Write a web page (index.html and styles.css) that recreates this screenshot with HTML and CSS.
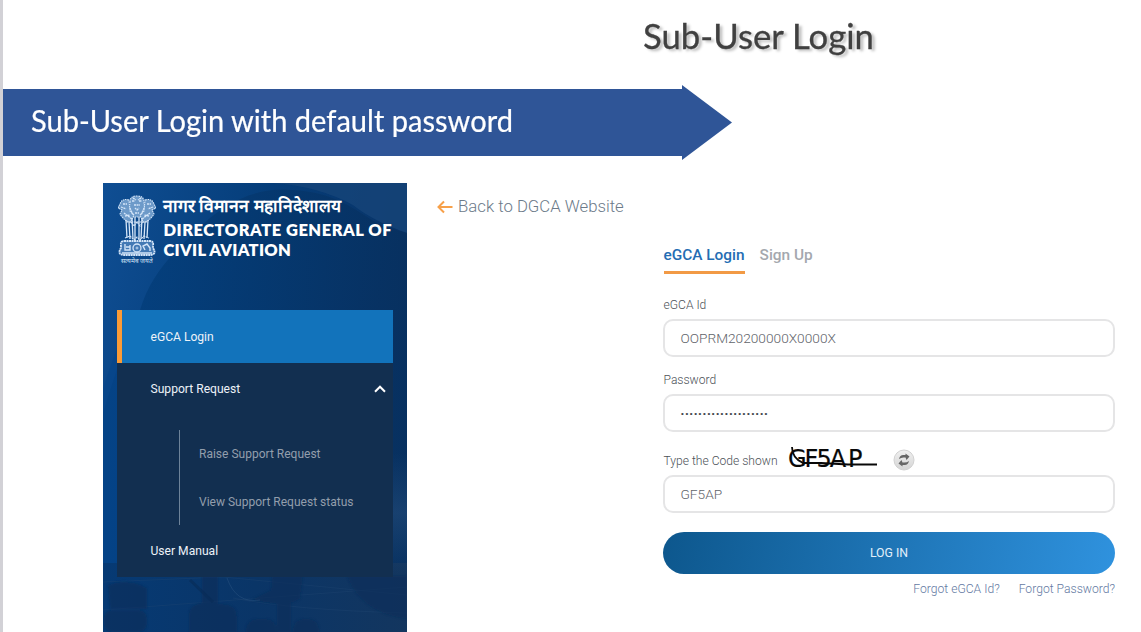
FILE: index.html
```html
<!DOCTYPE html>
<html lang="en">
<head>
<meta charset="utf-8">
<title>Sub-User Login</title>
<link rel="stylesheet" href="styles.css">
</head>
<body>
<div class="slide">
  <header class="slide-title"><h1>Sub-User Login</h1></header>
  <div class="banner"><h2>Sub-User Login with default password</h2></div>
  <main class="content">
    <aside class="sidebar">
      <svg class="scene" viewBox="0 0 304 449" preserveAspectRatio="none" aria-hidden="true">
        <defs>
          <linearGradient id="sky" x1="0" y1="0" x2="1" y2="0.35"><stop offset="0" stop-color="#0f4e93"/><stop offset=".5" stop-color="#053d79"/><stop offset="1" stop-color="#0a3264"/></linearGradient>
          <linearGradient id="hull" x1="0" y1="0" x2="1" y2="0"><stop offset="0" stop-color="#03407f"/><stop offset="1" stop-color="#07305f"/></linearGradient>
          <linearGradient id="ground" x1="0" y1="0" x2="1" y2="0"><stop offset="0" stop-color="#063a74"/><stop offset=".5" stop-color="#0a3567"/><stop offset="1" stop-color="#13365f"/></linearGradient>
          <linearGradient id="glow" x1="0" y1="0" x2="0" y2="1"><stop offset="0" stop-color="#315986" stop-opacity="0"/><stop offset=".5" stop-color="#315986" stop-opacity=".4"/><stop offset="1" stop-color="#315986" stop-opacity="0"/></linearGradient>
          <filter id="soft"><feGaussianBlur stdDeviation="1.2"/></filter>
        </defs>
        <rect width="304" height="449" fill="url(#sky)"/>
        <path d="M170 0H304V50Q270 38 250 22Q215 3 170 0Z" fill="#174679" opacity=".75"/>
        <path d="M37 127C48 91 70 70 92 49C125 14 160 4 190 7C230 9 250 25 277 42L304 50V400H0V230Q18 170 37 127Z" fill="url(#hull)" opacity=".85"/>
        <path d="M0 205L14 165V394H0Z" fill="#05458a" opacity=".6"/>
        <rect y="380" width="304" height="69" fill="url(#ground)"/>
        <path d="M0 399L120 394L304 412M0 427L304 404M130 415Q190 427 304 430" fill="none" stroke="#214873" opacity=".35"/>
        <g fill="#082d5a" opacity=".65" filter="url(#soft)">
          <path d="M99 393H115V421Q134 420 134 434V449H86V430Q88 421 99 420Z"/>
          <path d="M169 393H200L197 416L188 420V449H174V421L148 417L168 407Z"/>
          <rect x="143" y="436" width="31" height="26" rx="11"/><rect x="190" y="436" width="26" height="26" rx="10"/>
          <path d="M5 402Q24 394 44 405V426H7Z"/><rect x="1" y="427" width="43" height="22" rx="8"/>
          <path d="M244 393H304V436Q258 430 244 393Z"/>
        </g>
        <path d="M87 397L110 419" fill="none" stroke="#082b57" stroke-width="3" opacity=".6"/>
        <path d="M124 395Q133 421 157 417" fill="none" stroke="#315986" opacity=".4"/>
        <rect x="290" y="270" width="14" height="120" fill="url(#glow)"/>
      </svg>
      <div class="brand">
        <div class="emblem">
          <svg width="38" height="62" viewBox="0 0 38 62" fill="none" stroke="#d4e5f8" aria-hidden="true">
            <path d="M12 7Q12 1 19 1Q26 1 26 7L27 15L23 22H15L11 15Z" fill="#6d9ac9" stroke-width="1.2" stroke-dasharray="1.5 .8"/>
            <path d="M11 5Q4 3 2 9L0 13L4 15L2 19Q7 27 13 27L16 20L12 16ZM27 5Q34 3 36 9L38 13L34 15L36 19Q31 27 25 27L22 20L26 16Z" fill="#6d9ac9" stroke-width="1.1" stroke-dasharray="1.5 .8"/>
            <path d="M14 6H17M21 6H24M16 10H22M17 13L19 15L21 13M5 9H9M3 12L8 14M29 9H33M35 12L30 14M6 18L14 24M32 18L24 24M12 13L15 20M26 13L23 20M17 18H21M7 21L12 20M31 21L26 20M15 3L18 5M23 3L20 5" stroke-width="1.3" stroke-dasharray="2 .6"/>
            <path d="M8 25L9 43M11 27L12 44M14 23L15 44M17 22L17 45M21 22L21 45M24 23L23 44M27 27L26 44M30 25L29 43" stroke-width="1.3"/>
            <path d="M8 27H30M13 27L16 31L19 27L22 31L25 27M7 43L12 41L16 45L19 42L22 45L26 41L31 43" stroke-width="1.1" stroke-dasharray="2 .7"/>
            <path d="M6 46H32Q36 46 35 51V53Q39 59 33 60H5Q-1 59 3 53V51Q2 46 6 46Z" fill="#4379b4" stroke-width="1.8" stroke-dasharray="2 .5"/>
            <path d="M4 58H34M7 49V55H12V50M12 52H8M27 55L25 51L29 49L32 53V56" stroke-width="1.4"/>
            <circle cx="19" cy="53" r="4" stroke-width="1.3"/><circle cx="19" cy="53" r="1" stroke-width=".8"/>
          </svg>
          <span class="motto" lang="hi">सत्यमेव जयते</span>
        </div>
        <div class="brand-text">
          <div class="hindi" lang="hi">नागर विमानन महानिदेशालय</div>
          <div class="english"><span class="line-a">DIRECTORATE GENERAL OF</span><br><span class="line-b">CIVIL AVIATION</span></div>
        </div>
      </div>
      <nav class="menu">
        <a class="item active">eGCA Login</a>
        <a class="item support">Support Request
          <svg width="12" height="8" viewBox="0 0 12 8" fill="none" stroke="#fff" stroke-width="2"><path d="M1 6.7L6 1.7L11 6.7"/></svg>
        </a>
        <div class="submenu"><a class="raise">Raise Support Request</a><a class="view">View Support Request status</a></div>
        <a class="item manual">User Manual</a>
      </nav>
    </aside>
    <section class="page">
      <a class="back"><svg width="16" height="14" viewBox="0 0 16 14" fill="none" stroke="#f7a049" stroke-width="2"><path d="M15.5 7H1.5M7 1.5L1.5 7L7 12.5"/></svg><span>Back to DGCA Website</span></a>
      <form class="login">
        <div class="tabs"><a class="tab selected">eGCA Login</a><a class="tab signup">Sign Up</a></div>
        <label class="label id-label">eGCA Id</label>
        <div class="field"><span class="id-value">OOPRM20200000X0000X</span></div>
        <label class="label password-label">Password</label>
        <div class="field password"><span class="dots">••••••••••••••••••••</span></div>
        <div class="captcha-row">
          <label class="label code-label">Type the Code shown</label>
          <div class="captcha"><span>GF5<i class="wide">A</i>P</span>
            <svg width="90" height="28" viewBox="0 0 90 28" fill="none" stroke="#080808"><path d="M4 2Q4 13 15 18L33 18L60 19.5H89" stroke-width="1.8"/></svg>
          </div>
          <svg class="refresh" width="22" height="22" viewBox="0 0 22 22"><defs><linearGradient id="knob" x1="0" y1="0" x2="0" y2="1"><stop offset="0" stop-color="#f0f0f0"/><stop offset="1" stop-color="#d5d5d5"/></linearGradient></defs><circle cx="11" cy="11" r="10" fill="url(#knob)" stroke="#d2d2d2"/><path d="M6 10Q7 5.5 11 6H12.5V4.500L16.5 7.500L13.500 11L12.500 8.500H10.5Q8 8.500 6 10ZM16 12Q15 16.500 11 16H9.500V17.500L5.500 14.500L8.500 11L9.500 13.500H11.500Q14 13.500 16 12Z" fill="#666"/></svg>
        </div>
        <div class="field"><span class="code-value">GF5AP</span></div>
        <button class="submit" type="button">LOG IN</button>
        <div class="links"><a class="forgot-id">Forgot eGCA Id?</a><a class="forgot-pass">Forgot Password?</a></div>
      </form>
    </section>
  </main>
</div>
</body>
</html>
```
FILE: styles.css
```css
* { box-sizing: border-box; }
body { margin: 0; background: #fff; font-family: Roboto, sans-serif; }
h1, h2 { margin: 0; width: max-content; font-weight: 400; font-family: Lato, sans-serif; white-space: nowrap; transform-origin: 0 50%; }
.slide { width: 1141px; height: 632px; overflow: hidden; border-left: 3px solid #d2d1d6; }
.slide-title { height: 85px; padding: 14px 0 0 640px; }
h1 { font-size: 35.5px; line-height: 44px; color: #404040; text-shadow: 3px 2px 3px #bbb; transform: scaleX(.978); -webkit-text-stroke: .3px #404040; }
.banner { width: 730px; height: 75px; padding: 12px 0 0 28px; background: #2f5597; clip-path: polygon(0 4px, 679px 4px, 679px 0, 729px 37.5px, 679px 75px, 679px 71px, 0 71px); }
h2 { color: #fff; font-size: 30px; line-height: 46px; transform: scaleX(.968); -webkit-text-stroke: .2px #fff; }
.content { display: flex; height: 449px; margin: 23px 0 0 100px; }
.sidebar { display: grid; width: 304px; height: 449px; grid-template: 127px 322px / 304px; overflow: hidden; }
.scene { grid-area: 1 / 1 / 3 / 2; width: 304px; height: 449px; }
.brand { grid-area: 1 / 1; z-index: 1; display: flex; padding: 12px 0 0 15px; color: #fff; }
.emblem { width: 38px; margin-right: 7px; display: flex; flex-direction: column; align-items: center; }
.motto { white-space: nowrap; font-size: 6.5px; line-height: 8px; font-weight: 400; color: #d4e5f8; }
.hindi { height: 25px; line-height: 22px; font-size: 17.4px; font-weight: 600; white-space: nowrap; }
.english { font: 800 16.5px/20px Lato, sans-serif; white-space: nowrap; letter-spacing: .5px; padding-left: .5px; }
.line-b { letter-spacing: .27px; }
.menu { grid-area: 2 / 1; z-index: 1; align-self: start; width: 276px; height: 267px; margin-left: 14px; background: #122f50; color: #edf2f8; font-size: 12.1px; }
.item { display: flex; align-items: center; height: 53px; padding: 0 7px 0 33.5px; font-weight: 400; }
.item.active { padding-left: 28.5px; border-left: 5px solid #fb9b36; background: #1273bb; }
.support { justify-content: space-between; height: 52px; }
.submenu { height: 95px; margin: 15px 0 0 62px; padding-left: 19px; border-left: 1px solid #6d8399; color: #929eac; font-size: 12.03px; }
.submenu a { display: block; height: 48px; line-height: 48px; }
.manual { height: 52px; }
.page { width: 720px; padding-left: 30px; }
.back { display: flex; align-items: center; gap: 5px; height: 45px; font-size: 16.75px; color: #6c7a89; font-weight: 300; }
.back svg { margin-top: 3px; }
.login { width: 452px; margin: 12px 0 0 226px; }
.tabs { display: flex; gap: 15px; height: 35px; padding-left: .5px; }
.tab { height: 34px; color: #a4a8ae; font-size: 15.4px; line-height: 30px; font-weight: 500; }
.tab.selected { color: #246db3; border-bottom: 3px solid #f29a45; }
.label { display: block; padding-left: .5px; color: #4c5157; font-size: 12.1px; line-height: 20px; font-weight: 300; white-space: nowrap; }
.id-label { padding-top: 20px; height: 44px; }
.password-label { padding-top: 13px; height: 37px; }
.field { height: 38px; border: 2px solid #e5e5e6; border-radius: 10px; padding-left: 15.5px; display: flex; align-items: center; font-size: 13.7px; color: #5f646a; font-weight: 300; }
.dots { font-family: "DejaVu Sans", sans-serif; font-size: 8px; letter-spacing: 1.6px; color: #40444a; padding-left: .5px; }
.captcha-row { display: flex; height: 43px; align-items: flex-start; }
.code-label { width: 125px; padding-top: 19px; }
.captcha { display: grid; width: 91px; height: 28px; margin: 13px 14px 0 0; color: #080808; font-family: "DejaVu Sans", sans-serif; font-size: 24px; line-height: 28px; letter-spacing: -2px; -webkit-text-stroke: .2px #080808; }
.captcha > * { grid-area: 1 / 1; }
.wide { font-style: normal; letter-spacing: 2px; }
.refresh { margin-top: 17px; }
.submit { display: block; width: 452px; height: 42px; margin-top: 19px; border: 0; border-radius: 21px; background: linear-gradient(100deg, #0d578d, #2f92de); color: #e2effa; font: 400 12.3px Roboto, sans-serif; }
.links { display: flex; justify-content: flex-end; gap: 19px; padding-top: 6px; color: #6379a2; font-size: 12.15px; line-height: 18px; font-weight: 300; white-space: nowrap; }
```
